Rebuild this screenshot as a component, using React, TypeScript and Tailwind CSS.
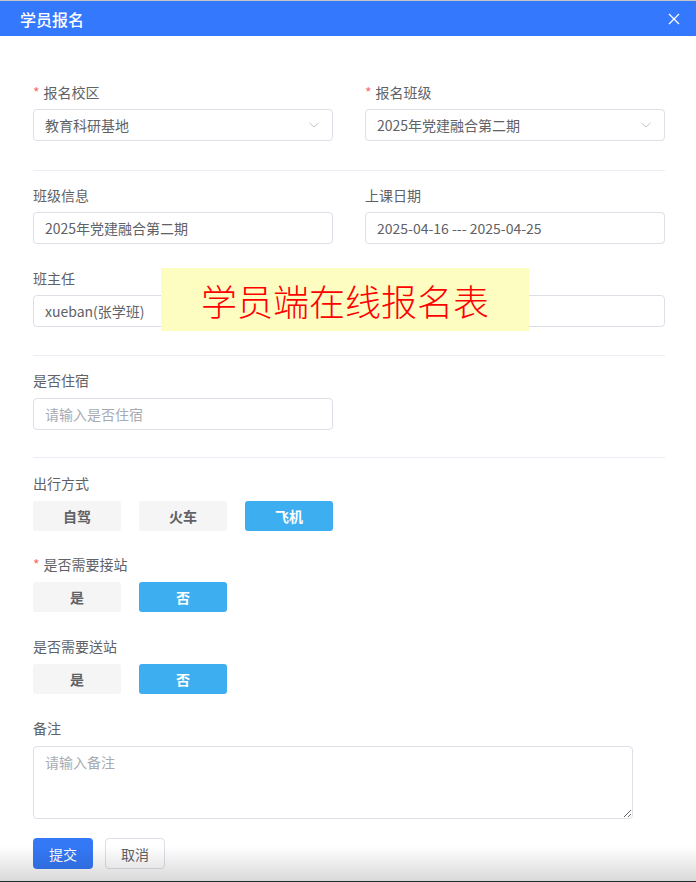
import React from "react";

const font = { fontFamily: '"Noto Sans CJK SC", "Noto Sans", sans-serif' };

const Label = ({ text, required }: { text: string; required?: boolean }) => (
  <div className="flex h-5 items-center pb-[2px] text-sm leading-5 text-[#606266]">
    {required && <span className="mr-[4px] text-[#f56c6c]">*</span>}
    <span>{text}</span>
  </div>
);

const TextBox = ({ value, placeholder }: { value?: string; placeholder?: string }) => (
  <div className="mt-[6px] flex h-8 items-center rounded-[4px] border border-[#dcdfe6] px-[11px] text-sm">
    {value ? (
      <span className="text-[#606266]">{value}</span>
    ) : (
      <span className="text-[#a8abb2]">{placeholder}</span>
    )}
  </div>
);

const SelectBox = ({ value }: { value: string }) => (
  <div className="mt-[6px] flex h-8 items-center justify-between rounded-[4px] border border-[#dcdfe6] pl-[11px] pr-[12px] text-sm">
    <span className="text-[#606266]">{value}</span>
    <svg width="12" height="12" viewBox="0 0 12 12" fill="none">
      <path d="M1.5 4 L6 8 L10.5 4" stroke="#c0c4cc" strokeWidth="1" />
    </svg>
  </div>
);

const Divider = () => <div className="h-px w-full bg-[#ebeef5]" />;

const Choices = ({ items, active }: { items: string[]; active: string }) => (
  <div className="mt-[7px] flex gap-[18px]">
    {items.map((item) => (
      <div
        key={item}
        className={
          item === active
            ? "flex h-[30px] w-[88px] items-center justify-center rounded-[3px] bg-[#3daeef] text-sm font-semibold text-white"
            : "flex h-[30px] w-[88px] items-center justify-center rounded-[3px] bg-[#f5f5f5] text-sm font-semibold text-[#606266]"
        }
      >
        {item}
      </div>
    ))}
  </div>
);

export default function App() {
  return (
    <div className="relative h-[882px] w-full overflow-hidden bg-white" style={font}>
      <div className="h-px bg-[#c6c6c6]" />
      <div className="flex h-[35px] items-center justify-between bg-[#3478fe] pl-[20px] pr-[16px]">
        <span className="text-base font-medium text-white">学员报名</span>
        <svg width="12" height="12" viewBox="0 0 12 12">
          <path d="M1 1 L11 11 M11 1 L1 11" stroke="white" strokeWidth="1.3" />
        </svg>
      </div>

      <div className="px-[33px] pt-[47px]">
        <div className="grid w-[632px] grid-cols-2 gap-x-[32px]">
          <div>
            <Label text="报名校区" required />
            <SelectBox value="教育科研基地" />
          </div>
          <div>
            <Label text="报名班级" required />
            <SelectBox value="2025年党建融合第二期" />
          </div>
        </div>

        <div className="mb-[15px] mt-[29px] w-[632px]">
          <Divider />
        </div>

        <div className="grid w-[632px] grid-cols-2 gap-x-[32px] gap-y-[25px]">
          <div>
            <Label text="班级信息" />
            <TextBox value="2025年党建融合第二期" />
          </div>
          <div>
            <Label text="上课日期" />
            <TextBox value="2025-04-16 --- 2025-04-25" />
          </div>
          <div>
            <Label text="班主任" />
            <TextBox value="xueban(张学班)" />
          </div>
          <div>
            <Label text="" />
            <TextBox value=" " />
          </div>
        </div>

        <div className="mb-[15px] mt-[28px] w-[632px]">
          <Divider />
        </div>

        <div className="w-[300px]">
          <Label text="是否住宿" />
          <div className="mt-[7px] flex h-8 items-center rounded-[4px] border border-[#dcdfe6] px-[11px] text-sm text-[#a8abb2]">
            请输入是否住宿
          </div>
        </div>

        <div className="mb-[16px] mt-[27px] w-[632px]">
          <Divider />
        </div>

        <Label text="出行方式" />
        <Choices items={["自驾", "火车", "飞机"]} active="飞机" />

        <div className="mt-[24px]">
          <Label text="是否需要接站" required />
          <div className="mt-[2px]">
            <Choices items={["是", "否"]} active="否" />
          </div>
        </div>

        <div className="mt-[25px]">
          <Label text="是否需要送站" />
          <Choices items={["是", "否"]} active="否" />
        </div>

        <div className="mt-[25px]">
          <Label text="备注" />
          <textarea
            placeholder="请输入备注"
            className="mt-[7px] block h-[73px] w-[600px] rounded-[4px] border border-[#dcdfe6] px-[11px] py-[5px] text-sm text-[#606266] outline-none placeholder:text-[#a8abb2]"
            style={font}
          />
        </div>

        <div className="mt-[19px] flex gap-[12px]">
          <div className="flex h-[31px] w-[60px] items-center justify-center rounded-[4px] bg-[#3478f6] text-sm text-white">
            提交
          </div>
          <div className="flex h-[31px] w-[60px] items-center justify-center rounded-[4px] border border-[#dcdfe6] bg-white text-sm text-[#606266]">
            取消
          </div>
        </div>
      </div>

      <div className="absolute left-[161px] top-[268px] flex h-[63px] w-[368px] items-center justify-center bg-[#fdfdc2]">
        <span className="text-[36px] font-light leading-none text-[#ff0000]">学员端在线报名表</span>
      </div>

      <div className="pointer-events-none absolute bottom-0 left-0 h-[36px] w-full border-b border-[#1c2b29] bg-gradient-to-b from-black/0 to-black/15" />
    </div>
  );
}
